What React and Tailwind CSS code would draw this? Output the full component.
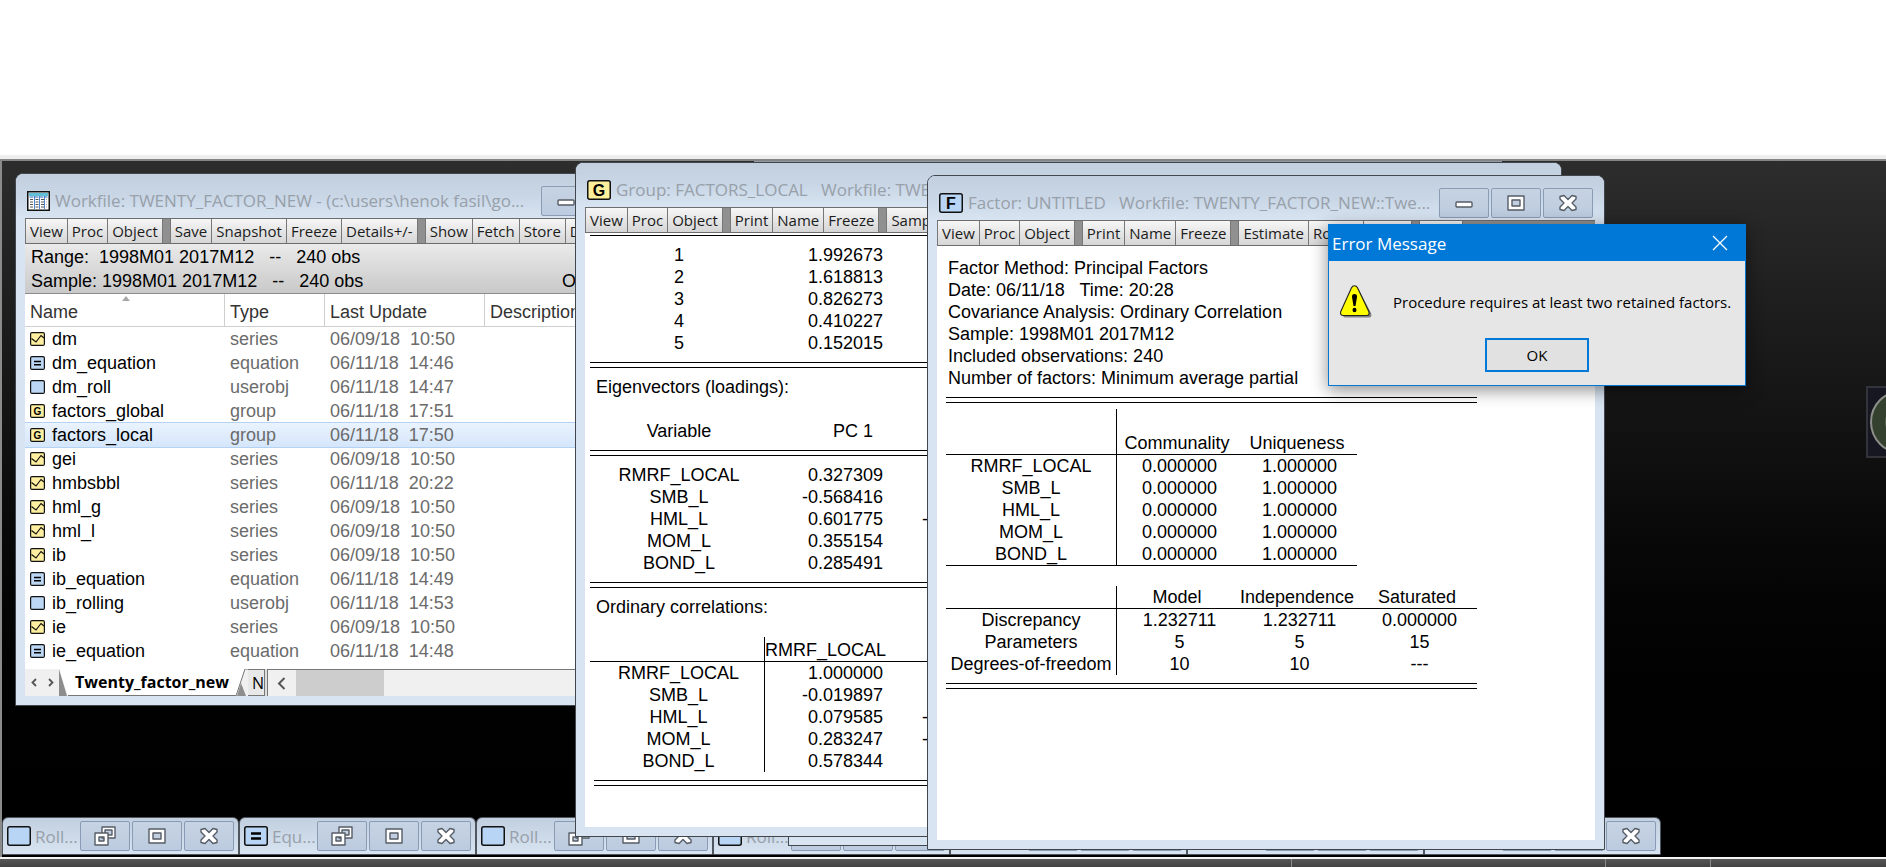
import React from 'react';

const objects = [
  { name: 'dm', type: 'series', date: '06/09/18', time: '10:50' },
  { name: 'dm_equation', type: 'equation', date: '06/11/18', time: '14:46' },
  { name: 'dm_roll', type: 'userobj', date: '06/11/18', time: '14:47' },
  { name: 'factors_global', type: 'group', date: '06/11/18', time: '17:51' },
  { name: 'factors_local', type: 'group', date: '06/11/18', time: '17:50', selected: true },
  { name: 'gei', type: 'series', date: '06/09/18', time: '10:50' },
  { name: 'hmbsbbl', type: 'series', date: '06/11/18', time: '20:22' },
  { name: 'hml_g', type: 'series', date: '06/09/18', time: '10:50' },
  { name: 'hml_l', type: 'series', date: '06/09/18', time: '10:50' },
  { name: 'ib', type: 'series', date: '06/09/18', time: '10:50' },
  { name: 'ib_equation', type: 'equation', date: '06/11/18', time: '14:49' },
  { name: 'ib_rolling', type: 'userobj', date: '06/11/18', time: '14:53' },
  { name: 'ie', type: 'series', date: '06/09/18', time: '10:50' },
  { name: 'ie_equation', type: 'equation', date: '06/11/18', time: '14:48' },
];

const eigenvalues = [
  ['1', '1.992673'],
  ['2', '1.618813'],
  ['3', '0.826273'],
  ['4', '0.410227'],
  ['5', '0.152015'],
];

const loadings = [
  ['RMRF_LOCAL', '0.327309', ''],
  ['SMB_L', '-0.568416', ''],
  ['HML_L', '0.601775', '-'],
  ['MOM_L', '0.355154', ''],
  ['BOND_L', '0.285491', ''],
];

const correlations = [
  ['RMRF_LOCAL', '1.000000', ''],
  ['SMB_L', '-0.019897', ''],
  ['HML_L', '0.079585', '-'],
  ['MOM_L', '0.283247', '-'],
  ['BOND_L', '0.578344', ''],
];

const communalities = ['RMRF_LOCAL', 'SMB_L', 'HML_L', 'MOM_L', 'BOND_L'].map((name) => [name, '0.000000', '1.000000']);

const fit = [
  ['Discrepancy', '1.232711', '1.232711', '0.000000'],
  ['Parameters', '5', '5', '15'],
  ['Degrees-of-freedom', '10', '10', '---'],
];

const factorInfo = [
  'Factor Method: Principal Factors',
  'Date: 06/11/18   Time: 20:28',
  'Covariance Analysis: Ordinary Correlation',
  'Sample: 1998M01 2017M12',
  'Included observations: 240',
  'Number of factors: Minimum average partial',
];

const minimized = ['userobj', 'equation', 'userobj', 'userobj', 'equation', 'userobj', 'equation'];

// Small 15x14 icon used in the workfile directory
function ObjectIcon({ type }) {
  const fill = type === 'series' || type === 'group' ? '#fdeea0' : '#bcd6f4';
  return (
    <svg width="15" height="14" viewBox="0 0 15 14" className="shrink-0">
      <rect x="0.6" y="0.6" width="13.8" height="12.8" rx="1.5" fill={fill} stroke="#111" strokeWidth="1.2" />
      {type === 'series' && <path d="M1.5 6.5 L6 10 L11 3.5 L14 6" fill="none" stroke="#111" strokeWidth="1.2" />}
      {type === 'equation' && <path d="M4 5.5 H11 M4 8.8 H11" stroke="#000" strokeWidth="1.6" />}
      {type === 'group' && (
        <text x="7.5" y="10.5" textAnchor="middle" fontSize="10" fontWeight="700" fontFamily="Liberation Sans, sans-serif">G</text>
      )}
    </svg>
  );
}

function TitleIcon({ kind }) {
  if (kind === 'workfile') {
    return (
      <svg width="23" height="20" viewBox="0 0 23 20" className="shrink-0">
        <rect x="0.75" y="0.75" width="21.5" height="18.5" fill="#fff" stroke="#111" strokeWidth="1.5" />
        <rect x="2" y="2" width="19" height="3" fill="#62bfd8" />
        <path d="M2.5 6 H20.5" stroke="#2f66b0" strokeWidth="1.2" strokeDasharray="4 1" />
        <path d="M3 8.500 H20 M3 11 H20 M3 13.500 H20 M3 16 H20" stroke="#555" strokeWidth="1" strokeDasharray="3 2.5" />
        <path d="M7.5 5 V18 M12.500 5 V18 M17.500 5 V18" stroke="#4f86d0" strokeWidth="1" />
      </svg>
    );
  }
  const letter = kind === 'group' ? 'G' : kind === 'factor' ? 'F' : '';
  return (
    <svg width="24" height="20" viewBox="0 0 24 20" className="shrink-0">
      <rect x="0.75" y="0.75" width="22.5" height="18.5" rx="2" fill={kind === 'group' ? '#fdf09a' : '#b9d5f5'} stroke="#111" strokeWidth="1.5" />
      {kind === 'equation' && <path d="M7 7.5 H17 M7 12.5 H17" stroke="#000" strokeWidth="2.6" />}
      {letter && (
        <text x="12" y="15.5" textAnchor="middle" fontSize="16" fontWeight="700" fontFamily="Liberation Sans, sans-serif">{letter}</text>
      )}
    </svg>
  );
}

function CaptionButton({ kind }) {
  return (
    <button
      type="button"
      aria-label={kind}
      className="flex h-[30px] w-[50px] shrink-0 items-center justify-center rounded-xs border border-[#8a9bb5] bg-linear-to-b from-[#c6d3e3] to-[#bccbdf]"
    >
      <svg width="24" height="20" viewBox="0 0 24 20" fill="#fff" stroke="#555c66" strokeWidth="1.4">
        {kind === 'Minimize' && <rect x="4" y="9" width="16" height="5" rx="1" />}
        {kind === 'Maximize' && (
          <path fillRule="evenodd" d="M4 3 H20 V17 H4 Z M8 7 H16 V13 H8 Z" strokeLinejoin="round" />
        )}
        {kind === 'Restore' && (
          <>
            <path fillRule="evenodd" d="M9 1 H22 V12 H9 Z M12 4 H19 V9 H12 Z" strokeLinejoin="round" />
            <path fillRule="evenodd" d="M2 7 H15 V19 H2 Z M6 11 H11 V15 H6 Z" strokeLinejoin="round" />
          </>
        )}
        {kind === 'Close' && (
          <path d="M4 3.5 L8 2.5 L12 6.5 L16 2.5 L20 3.5 L20 6 L16 10 L20 14 L20 16.5 L16 17.5 L12 13.5 L8 17.5 L4 16.5 L4 14 L8 10 L4 6 Z" strokeLinejoin="round" />
        )}
      </svg>
    </button>
  );
}

function Window({ className, icon, title, groups = [], children }) {
  return (
    <section
      className={`absolute flex flex-col overflow-hidden rounded-t-lg border border-[#42474e] bg-[#d8e4f1] px-[9px] pb-[9px] shadow-[inset_0_1px_0_#eef4fa] ${className}`}
    >
      <header className="-mx-[9px] flex h-11 shrink-0 items-center gap-[5px] bg-linear-to-b from-[#c1cfdf] via-[#c8d6e6] to-[#d8e4f1] px-[11px] pt-[9px]">
        <TitleIcon kind={icon} />
        <h2 className="min-w-0 flex-1 overflow-hidden text-[17px] leading-6 whitespace-pre text-[#98a0a9]">{title}</h2>
        <div className="flex gap-[2px]">
          <CaptionButton kind="Minimize" />
          <CaptionButton kind="Maximize" />
          <CaptionButton kind="Close" />
        </div>
      </header>
      <div className="flex h-[26px] shrink-0 gap-[7px] overflow-hidden border-t border-b border-[#6d6d6d] bg-[#909090]">
        {groups.map((labels, i) => (
          <div key={i} className="flex">
            {labels.map((label) => (
              <button
                key={label}
                type="button"
                className="border-r border-[#777] bg-linear-to-b from-[#f6f6f6] to-[#d6d6d6] px-1 text-[15px] leading-6 whitespace-nowrap text-[#1c1c1c] first:border-l"
              >
                {label}
              </button>
            ))}
          </div>
        ))}
      </div>
      <div className="flex min-h-0 flex-1 flex-col overflow-hidden bg-white">{children}</div>
    </section>
  );
}

function DoubleRule() {
  return <div className="my-2 h-[6px] shrink-0 border-y border-black" />;
}

function WorkfileWindow() {
  return (
    <Window
      className="top-[12px] left-[13px] h-[533px] w-[692px]"
      icon="workfile"
      title="Workfile: TWENTY_FACTOR_NEW - (c:\users\henok fasil\go..."
      groups={[['View', 'Proc', 'Object'], ['Save', 'Snapshot', 'Freeze', 'Details+/-'], ['Show', 'Fetch', 'Store', 'Delete']]}
    >
      <div className="flex h-[50px] shrink-0 items-end justify-between border-b border-[#8c8c8c] bg-linear-to-b from-[#eaeaea] to-[#c9c9c9] pr-[31px] pl-[6px] font-['Liberation_Sans',sans-serif] text-[18px] leading-6 whitespace-pre">
        <div>
          <p>Range:  1998M01 2017M12   --   240 obs</p>
          <p>Sample: 1998M01 2017M12   --   240 obs</p>
        </div>
        <p>Order: Name</p>
      </div>
      <table className="w-full table-fixed border-separate border-spacing-0 font-['Liberation_Sans',sans-serif] text-[18px] leading-6">
        <colgroup>
          <col className="w-[200px]" />
          <col className="w-[100px]" />
          <col className="w-[160px]" />
          <col />
        </colgroup>
        <thead>
          <tr className="text-left text-[#333]">
            {['Name', 'Type', 'Last Update', 'Description'].map((label) => (
              <th key={label} className="relative h-[33px] border-r border-b border-[#cfcfcf] pt-1 pb-0 pl-[5px] font-normal">
                {label === 'Name' && (
                  <svg width="8" height="5" viewBox="0 0 8 5" className="absolute top-0.5 left-[97px]">
                    <path d="M0 5 L4 0 L8 5 Z" fill="#a8a8a8" />
                  </svg>
                )}
                {label}
              </th>
            ))}
          </tr>
        </thead>
        <tbody>
          {objects.map((obj) => (
            <tr
              key={obj.name}
              className={obj.selected ? 'bg-linear-to-b from-[#eaf3fe] to-[#d5e6fb] outline outline-[#b4d2f3]' : ''}
            >
              <td className="h-6 p-0 pl-[5px] text-black">
                <span className="flex items-center gap-[7px]">
                  <ObjectIcon type={obj.type} />
                  {obj.name}
                </span>
              </td>
              <td className="p-0 pl-[5px] text-[#6b6b6b]">{obj.type}</td>
              <td className="p-0 pl-[5px] whitespace-pre text-[#6b6b6b]">{`${obj.date}  ${obj.time}`}</td>
              <td className="p-0" />
            </tr>
          ))}
        </tbody>
      </table>
      <div className="mt-auto flex h-[27px] shrink-0 bg-[#f0f0f0]">
        <div className="flex w-[34px] items-center justify-around">
          <button type="button" aria-label="Previous page">
            <svg width="6" height="9" viewBox="0 0 6 9"><path d="M5 1 L1.5 4.5 L5 8" fill="none" stroke="#555" strokeWidth="1.8" /></svg>
          </button>
          <button type="button" aria-label="Next page">
            <svg width="6" height="9" viewBox="0 0 6 9"><path d="M1 1 L4.500 4.500 L1 8" fill="none" stroke="#555" strokeWidth="1.8" /></svg>
          </button>
        </div>
        <svg width="9" height="27" viewBox="0 0 9 27">
          <path d="M0 0 H9 V27 Z" fill="#fff" />
          <path d="M0 0 L8 27 H0 Z" fill="#8d8d8d" />
        </svg>
        <button type="button" className="border-b border-[#777] bg-white px-[7px] text-[16px] leading-6 font-bold">Twenty_factor_new</button>
        <svg width="12" height="27" viewBox="0 0 12 27">
          <path d="M0 0 H9 L0 27 Z" fill="#fff" />
          <path d="M5 14 L1 27 H10 Z" fill="#8d8d8d" />
          <path d="M0 27 L9 0 H12" fill="none" stroke="#777" />
        </svg>
        <button type="button" className="w-[16px] overflow-hidden border-t border-b border-[#777] bg-[#e8e8e8] pl-1 text-left text-[16px] leading-6">N</button>
        <div className="w-[4px] border-x border-[#777] bg-[#ddd]" />
        <div className="flex flex-1 items-center border-t border-[#777] pl-[9px]">
          <svg width="9" height="13" viewBox="0 0 9 13"><path d="M7.500 1 L2 6.500 L7.500 12" fill="none" stroke="#555" strokeWidth="2" /></svg>
          <div className="ml-[10px] h-full w-[88px] bg-[#cdcdcd]" />
        </div>
      </div>
    </Window>
  );
}

function GroupRows({ rows, ruled }) {
  return (
    <tbody>
      {rows.map((row) => (
        <tr key={row[0]}>
          <th className={`h-[22px] p-0 pl-[3px] text-center font-normal ${ruled ? 'border-r border-black' : ''}`}>{row[0]}</th>
          <td className="p-0 pr-[2px] text-right">{row[1]}</td>
          <td className="p-0 pl-[37px]">{row[2]}</td>
        </tr>
      ))}
    </tbody>
  );
}

function GroupCols() {
  return (
    <colgroup>
      <col className="w-[175px]" />
      <col className="w-[120px]" />
      <col />
    </colgroup>
  );
}

function GroupWindow() {
  const table = 'w-full table-fixed border-separate border-spacing-0';
  return (
    <Window
      className="top-px left-[573px] h-[675px] w-[987px]"
      icon="group"
      title="Group: FACTORS_LOCAL   Workfile: TWENTY_FACTOR_NEW::Twenty_factor_new\"
      groups={[['View', 'Proc', 'Object'], ['Print', 'Name', 'Freeze'], ['Sample', 'Sheet', 'Stats', 'Spec']]}
    >
      <div className="pt-[2px] pl-[5px] font-['Liberation_Sans',sans-serif] text-[18px] leading-[22px] text-black">
        <div className="mb-2 border-t border-black" />
        <table className={table}>
          <GroupCols />
          <GroupRows rows={eigenvalues} />
        </table>
        <DoubleRule />
        <p className="mb-[22px] pl-[6px]">Eigenvectors (loadings):</p>
        <table className={table}>
          <GroupCols />
          <thead>
            <tr>
              <th className="h-[22px] p-0 pl-[3px] font-normal">Variable</th>
              <th className="p-0 pr-[12px] text-right font-normal">PC 1</th>
              <th className="p-0" />
            </tr>
          </thead>
        </table>
        <DoubleRule />
        <table className={table}>
          <GroupCols />
          <GroupRows rows={loadings} />
        </table>
        <DoubleRule />
        <p className="mb-[19px] pl-[6px]">Ordinary correlations:</p>
        <div className="ml-1">
          <table className={`${table} -ml-1`}>
            <GroupCols />
            <thead>
              <tr>
                <th className="h-[25px] border-r border-b border-black p-0" />
                <th className="border-b border-black p-0 text-right align-bottom font-normal whitespace-nowrap">RMRF_LOCAL</th>
                <th className="border-b border-black p-0" />
              </tr>
            </thead>
            <GroupRows rows={correlations} ruled />
          </table>
          <DoubleRule />
        </div>
      </div>
    </Window>
  );
}

function FactorTable({ head, rows, className, headHeight, closed }) {
  return (
    <table className={`table-fixed border-separate border-spacing-0 ${className}`}>
      <colgroup>
        <col className="w-[171px]" />
        {head.map((label) => <col key={label} className="w-[120px]" />)}
      </colgroup>
      <thead>
        <tr>
          <th className={`border-r border-b border-black p-0 ${headHeight}`} />
          {head.map((label) => (
            <th key={label} className="border-b border-black p-0 text-center align-bottom font-normal">{label}</th>
          ))}
        </tr>
      </thead>
      <tbody>
        {rows.map((row, i) => {
          const last = closed && i === rows.length - 1 ? 'border-b' : '';
          return (
            <tr key={row[0]}>
              <th className={`h-[22px] border-r border-black p-0 text-center font-normal whitespace-nowrap ${last}`}>{row[0]}</th>
              {row.slice(1).map((value, j) => (
                <td key={j} className={`border-black p-0 pl-[5px] text-center ${last}`}>{value}</td>
              ))}
            </tr>
          );
        })}
      </tbody>
    </table>
  );
}

function FactorWindow() {
  return (
    <Window
      className="top-[14px] left-[925px] h-[675px] w-[678px]"
      icon="factor"
      title="Factor: UNTITLED   Workfile: TWENTY_FACTOR_NEW::Twe..."
      groups={[['View', 'Proc', 'Object'], ['Print', 'Name', 'Freeze'], ['Estimate', 'Rotate', 'Score'], ['Stats']]}
    >
      <div className="pt-[11px] pl-[9px] font-['Liberation_Sans',sans-serif] text-[18px] leading-[22px] text-black">
        <div className="w-[531px]">
          <div className="pl-[2px] whitespace-pre">
            {factorInfo.map((line) => <p key={line}>{line}</p>)}
          </div>
          <DoubleRule />
          <FactorTable className="-mt-[2px] w-[411px]" head={['Communality', 'Uniqueness']} rows={communalities} headHeight="h-[46px]" closed />
          <FactorTable className="mt-[20px] w-[531px]" head={['Model', 'Independence', 'Saturated']} rows={fit} headHeight="h-[23px]" />
          <DoubleRule />
        </div>
      </div>
    </Window>
  );
}

function MinimizedWindow({ kind }) {
  return (
    <div className="flex h-[38px] w-[237px] shrink-0 items-center rounded-t-md border border-[#50565e] bg-linear-to-b from-[#c1cfdf] to-[#d8e4f1] px-1">
      <TitleIcon kind={kind} />
      <span className="ml-1 flex-1 pt-0.5 text-[17px] leading-6 whitespace-nowrap text-[#98a0a9]">
        {kind === 'equation' ? 'Equ...' : 'Roll...'}
      </span>
      <div className="flex gap-[2px]">
        <CaptionButton kind="Restore" />
        <CaptionButton kind="Maximize" />
        <CaptionButton kind="Close" />
      </div>
    </div>
  );
}

function ErrorDialog() {
  return (
    <div
      role="dialog"
      aria-labelledby="error-title"
      className="absolute top-[63px] left-[1326px] w-[418px] border border-[#0078d7] bg-[#e6e6e6] shadow-[0_4px_16px_rgba(0,0,0,0.45)]"
    >
      <header className="flex h-9 items-center justify-between bg-[#0078d7] pr-[17px] pl-[3px] text-white">
        <h2 id="error-title" className="pt-0.5 text-[17px] leading-6">Error Message</h2>
        <button type="button" aria-label="Close">
          <svg width="16" height="16" viewBox="0 0 16 16"><path d="M1 1 L15 15 M15 1 L1 15" stroke="#fff" strokeWidth="1.3" /></svg>
        </button>
      </header>
      <div className="flex items-center gap-[21px] pt-[24px] pl-[11px]">
        <svg width="32" height="33" viewBox="0 0 32 33" className="shrink-0">
          <path d="M16 3 Q18 3 19 5 L31 28 Q32.500 32.500 29 32.500 H5 Q3 32.500 3 30 L15 5 Z" fill="#808080" />
          <path d="M14.500 0.800 Q16.500 0.800 17.500 2.800 L28.800 26.500 Q30 30.500 26.500 30.500 H3.500 Q-0.300 30.500 0.800 26.500 L11.500 2.800 Q12.500 0.800 14.500 0.800 Z" fill="#ffff00" stroke="#222" strokeWidth="1.1" />
          <path d="M14.500 9 Q17.200 9 17 12 L15.500 21 H13.500 L12 12 Q11.800 9 14.500 9 Z" fill="#000" />
          <ellipse cx="14.500" cy="25" rx="2" ry="2.200" fill="#000" />
        </svg>
        <p className="text-[15px] leading-6 whitespace-nowrap text-black">Procedure requires at least two retained factors.</p>
      </div>
      <div className="flex justify-center pt-[20px] pb-[13px]">
        <button type="button" className="h-[34px] w-[104px] border-2 border-[#0078d7] bg-[#e1e1e1] text-[15px] leading-6 text-black">OK</button>
      </div>
    </div>
  );
}

function App() {
  return (
    <div className="flex min-h-screen flex-col bg-white font-['Open_Sans','Noto_Sans',sans-serif]">
      <div className="h-[155px] shrink-0" />
      <div className="h-[6px] shrink-0 border-b-2 border-[#858585] bg-[#eeeeee]" />
      <main className="relative flex-1 overflow-hidden border-l-2 border-[#8b8b8b] bg-linear-to-b from-[#2d2d2d] to-black">
        {/* picture peeking in from the right edge of the workspace */}
        <svg width="71" height="72" viewBox="0 0 71 72" className="absolute top-[225px] -right-[51px]">
          <rect x="1" y="1" width="69" height="70" fill="#171722" stroke="#33333c" strokeWidth="2" />
          <circle cx="36" cy="36" r="31" fill="#35412f" stroke="#8d8f8a" strokeWidth="2" />
          <circle cx="36" cy="36" r="17" fill="#5b6a52" />
        </svg>
        <div className="absolute top-0 left-[752px] h-0.5 w-[748px] bg-[#8f99a5]" />
        <div className="absolute bottom-[2px] left-0 flex">
          {minimized.map((kind, i) => <MinimizedWindow key={i} kind={kind} />)}
        </div>
        <div className="absolute top-[12px] left-[786px] h-[673px] w-[714px] border border-[#42474e] bg-[#d8e4f1]" />
        <WorkfileWindow />
        <GroupWindow />
        <FactorWindow />
        <ErrorDialog />
      </main>
      <footer className="flex h-[10px] shrink-0 justify-end border-t-2 border-[#f4f4f4] bg-linear-to-b from-[#585858] to-[#424242]">
        <div className="w-[314px] border-l border-[#8a8a8a]" />
        <div className="w-[105px] border-l border-[#8a8a8a]" />
        <div className="w-[176px] border-l border-[#8a8a8a]" />
      </footer>
    </div>
  );
}

export default App;
